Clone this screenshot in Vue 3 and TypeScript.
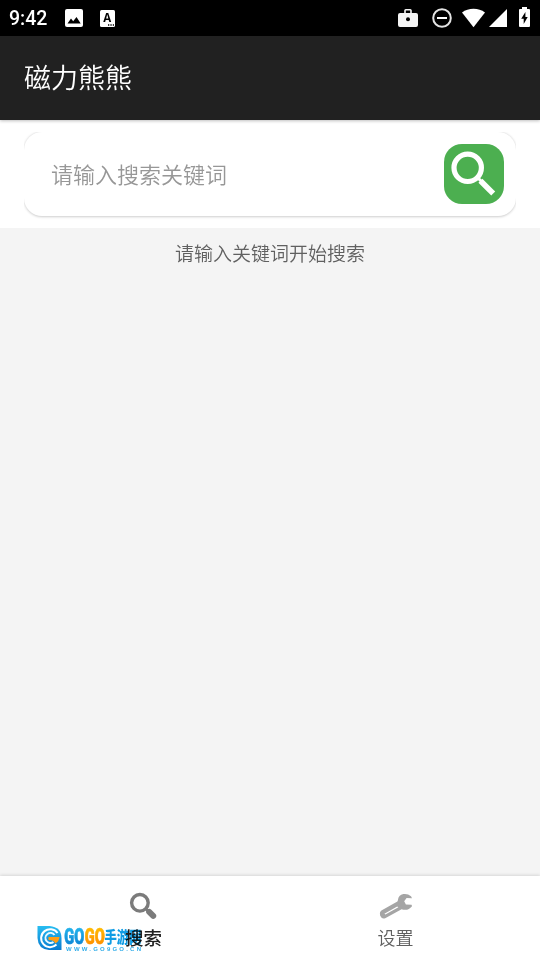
<template>
  <div class="phone">
    <div class="status-bar">
      <span class="time">9:42</span>
      <svg class="ico-photo" viewBox="0 0 18 18">
        <rect width="18" height="18" rx="2" fill="#fff" />
        <path d="M2.5 14.5 6 9.5l2.2 2.8L11.5 8l4.2 6.5z" fill="#000" />
      </svg>
      <svg class="ico-input" viewBox="0 0 15 17">
        <rect width="15" height="17" rx="1.5" fill="#fff" />
        <path d="M8 15h1.3M10.4 15h1.3M12.8 15h1.2" stroke="#000" stroke-width="1.3" />
        <text x="7.2" y="12" text-anchor="middle">A</text>
      </svg>
      <div class="status-right">
        <svg class="ico-case" width="20" height="20" viewBox="0 0 20 20">
          <path d="M6.2 5V2.6Q6.2 1 7.8 1h4.4q1.6 0 1.6 1.6V5H18q2 0 2 2v10q0 2-2 2H2q-2 0-2-2V7q0-2 2-2zm1.6 0h4.4V2.6H7.8z" fill="#f4f4f4" />
          <circle cx="10" cy="11.3" r="2" fill="#000" />
        </svg>
        <svg class="ico-dnd" width="20" height="20" viewBox="0 0 20 20">
          <circle cx="10" cy="10" r="8.8" fill="none" stroke="#e4e4e4" stroke-width="2" />
          <path d="M5 10h10" stroke="#fff" stroke-width="2" />
        </svg>
        <svg class="ico-wifi" width="23" height="20" viewBox="0 0 23 20">
          <path d="M0 4.5Q5 .8 11.5.8T23 4.5L11.5 19.2z" fill="#fff" />
        </svg>
        <svg class="ico-signal" width="18" height="18" viewBox="0 0 18 18">
          <path d="M18 0v18H0z" fill="#fff" />
        </svg>
        <svg class="ico-battery" width="11" height="20" viewBox="0 0 11 20">
          <path d="M3 0h5v2h2q1 0 1 1v16q0 1-1 1H1q-1 0-1-1V3q0-1 1-1h2z" fill="#fff" />
          <path d="M6.4 5 2.2 11.8h2.5V17l4-7H6.4z" fill="#000" />
        </svg>
      </div>
    </div>

    <header class="app-bar">{{ title }}</header>

    <section class="search-area">
      <div class="search-clip">
        <div class="search-card">
          <input v-model="keyword" type="text" placeholder="请输入搜索关键词" />
          <button type="button" aria-label="搜索">
            <svg viewBox="0 0 60 60">
              <circle cx="23.7" cy="23.8" r="13.7" fill="none" stroke="#fff" stroke-width="5.2" />
              <path d="m34 34 3 3" stroke="#fff" stroke-width="3" />
              <path d="M36.4 36.8 49.2 49.4" stroke="#fff" stroke-width="5.6" />
            </svg>
          </button>
        </div>
      </div>
    </section>

    <main class="content">请输入关键词开始搜索</main>

    <nav class="tab-bar">
      <div
        v-for="tab in tabs"
        :key="tab.id"
        class="tab"
        :class="{ active: tab.id === current }"
        @click="current = tab.id"
      >
        <svg v-if="tab.id === 'search'" class="tab-icon" viewBox="0 0 36 36">
          <circle cx="13.9" cy="14.8" r="8.3" fill="none" stroke="#7b7b7b" stroke-width="3.4" />
          <path d="m19.9 20.8 2.4 2.4" stroke="#7b7b7b" stroke-width="3" />
          <path d="m23.2 23.9 4 3.9" stroke="#7b7b7b" stroke-width="6" stroke-linecap="round" />
        </svg>
        <svg v-else class="tab-icon" viewBox="0 0 36 36">
          <path
            fill="#a5a5a5"
            fill-rule="evenodd"
            d="M33 8.2Q29.8 5.5 25.4 6.1 20.4 7 19.9 12.2L19.4 13.4 3.4 22.6Q1.2 24.2 2.2 27.8 3.7 31.4 7.2 30.2L23.6 21.3Q30.1 23.3 34 18.2L33.6 16.7 27.9 16.5 26.2 13.2 28.6 9.9 34 10.2zM6.4 25.8 19.2 18.4 20.4 19.2 7.4 26.6Z"
          />
        </svg>
        <span class="tab-label">{{ tab.label }}</span>
      </div>

      <div class="watermark">
        <svg width="106" height="28" viewBox="0 0 106 28">
          <defs>
            <linearGradient id="blue" x1="0" y1="0" x2="0" y2="1">
              <stop offset="0" stop-color="#28bdf1" />
              <stop offset="1" stop-color="#087bd0" />
            </linearGradient>
            <linearGradient id="orange" x1="0" y1="0" x2="0" y2="1">
              <stop offset="0" stop-color="#ffc400" />
              <stop offset="1" stop-color="#ff8500" />
            </linearGradient>
          </defs>
          <path d="M.5 2h12Q24.500 3 24.500 14v12H12Q1 25 .5 14z" fill="url(#blue)" />
          <path d="M20.500 9A9 9 0 1 0 19.500 20.500" fill="none" stroke="#fff" stroke-width="2" />
          <path d="M17.500 11A5 5 0 1 0 16.500 18" fill="none" stroke="#e8f8ff" stroke-width="2" />
          <path d="M11.500 13h11q-.5 5-4.500 6.500 0-3.500-6.500-3.500z" fill="#ff9d16" />
          <text class="logo" x="27.200" y="20" textLength="20" lengthAdjust="spacingAndGlyphs" fill="url(#blue)" stroke="url(#blue)">GO</text>
          <text class="logo" x="47.700" y="20" textLength="20" lengthAdjust="spacingAndGlyphs" fill="url(#orange)" stroke="url(#orange)">GO</text>
          <text class="logo-cn" x="67.500" y="18.600" textLength="37" lengthAdjust="spacingAndGlyphs" fill="#109ce4">手游网</text>
          <text class="logo-url" x="29" y="26.600" textLength="75" fill="#31ade9">WWW.GO9GO.CN</text>
        </svg>
      </div>
    </nav>
  </div>
</template>

<script lang="ts" setup>
import { ref } from "vue";

interface Tab {
  id: "search" | "settings";
  label: string;
}

const title = "磁力熊熊";
const keyword = ref("");
const current = ref<Tab["id"]>("search");

const tabs: Tab[] = [
  { id: "search", label: "搜索" },
  { id: "settings", label: "设置" },
];
</script>

<style>
body {
  margin: 0;
  background: #f4f4f4;
}
</style>

<style scoped>
.phone {
  display: flex;
  flex-direction: column;
  height: 100vh;
  overflow: hidden;
  background: #f4f4f4;
  font-family: "Noto Sans CJK SC", sans-serif;
}
.phone svg {
  display: block;
  flex: none;
}

.status-bar {
  display: flex;
  flex: none;
  align-items: center;
  box-sizing: border-box;
  height: 36px;
  padding: 0 10px 0 9px;
  background: #000;
}
.time {
  width: 56px;
  padding-top: 2px;
  color: #fff;
  font: 500 19.5px/34px Roboto, sans-serif;
}
.ico-photo {
  width: 18px;
  height: 18px;
  margin-right: 17px;
}
.ico-input {
  width: 15px;
  height: 17px;
}
.ico-input text {
  font: bold 11.5px "Open Sans", sans-serif;
}
.status-right {
  display: flex;
  align-items: center;
  margin-left: auto;
}
.ico-case {
  margin-bottom: 1px;
}
.ico-dnd {
  margin-left: 14px;
}
.ico-wifi {
  margin: 0 0 1px 10px;
}
.ico-signal {
  margin-left: 4px;
}
.ico-battery {
  margin: 0 0 2px 12px;
}

.app-bar {
  z-index: 1;
  flex: none;
  height: 84px;
  padding-left: 24px;
  background: #212121;
  box-shadow: 0 1px 3px rgba(0, 0, 0, 0.25);
  color: #fff;
  font-size: 27px;
  font-weight: 350;
  line-height: 82px;
}

.search-area {
  flex: none;
  box-sizing: border-box;
  height: 108px;
  padding: 0 24px;
  background: #fff;
}
/* keeps the card shadow from spreading sideways */
.search-clip {
  box-sizing: border-box;
  height: 108px;
  padding: 12px 0;
  overflow: hidden;
}
.search-card {
  display: flex;
  align-items: center;
  box-sizing: border-box;
  height: 84px;
  padding: 0 12px 0 27px;
  border-radius: 18px;
  background: #fff;
  box-shadow: 0 0.5px 2.5px rgba(0, 0, 0, 0.2);
  clip-path: inset(0 0 -4px 0);
}
.search-card input {
  flex: 1;
  min-width: 0;
  height: 60px;
  padding: 0 0 2px;
  border: none;
  outline: none;
  background: none;
  color: #333;
  font: 350 22px "Noto Sans CJK SC", sans-serif;
}
.search-card input::placeholder {
  color: #979797;
  opacity: 1;
}
.search-card button {
  width: 60px;
  height: 60px;
  padding: 0;
  border: none;
  border-radius: 18px;
  background: #4caf50;
}

.content {
  flex: 1;
  padding-top: 10px;
  color: #606060;
  font-size: 19px;
  font-weight: 350;
  line-height: 30px;
  text-align: center;
}

.tab-bar {
  position: relative;
  display: flex;
  flex: none;
  justify-content: center;
  box-sizing: border-box;
  height: 84px;
  padding-right: 1px;
  background: #fff;
  box-shadow: 0 -1px 3px rgba(0, 0, 0, 0.12);
}
.tab {
  display: flex;
  flex-direction: column;
  align-items: center;
  width: 252px;
  padding-top: 12px;
}
.tab-icon {
  width: 36px;
  height: 36px;
}
.tab-label {
  color: #606060;
  font-size: 18px;
  font-weight: 350;
  line-height: 27px;
}
.tab.active .tab-label {
  color: #212121;
  font-size: 18.5px;
  font-weight: 500;
}

/* the tab label underneath stays readable through the logo */
.watermark {
  position: absolute;
  top: 48px;
  left: 37px;
  mix-blend-mode: multiply;
  pointer-events: none;
}
.logo {
  font: 900 22px Roboto, sans-serif;
  stroke-width: 0.7px;
}
.logo-cn {
  font: 900 16px "Noto Sans CJK SC", sans-serif;
}
.logo-url {
  font: bold 6px "Liberation Sans", sans-serif;
}
</style>
